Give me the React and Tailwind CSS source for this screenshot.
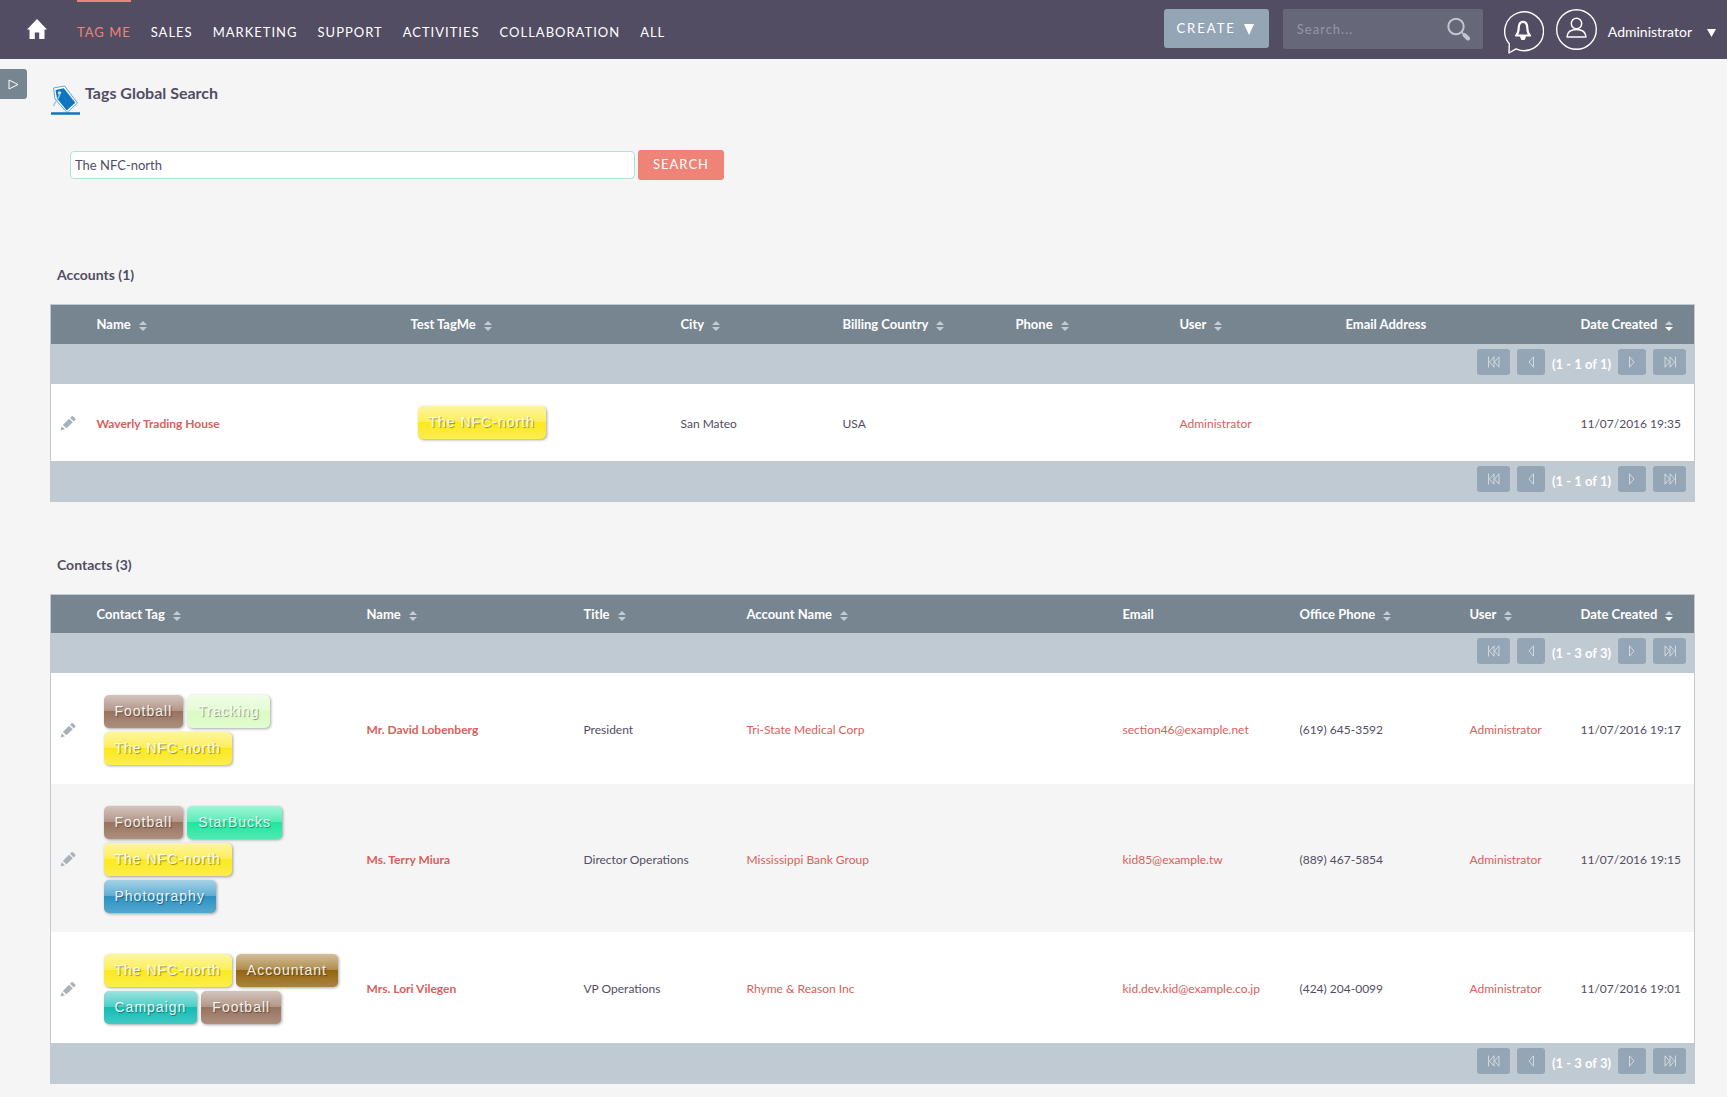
import { useState } from "react";
import clsx from "clsx";

const NAV = ["Tag Me", "Sales", "Marketing", "Support", "Activities", "Collaboration", "All"];

const TAG_COLORS = {
  Football: "bg-[#98735f]",
  Tracking: "bg-[#dafbc4]",
  "The NFC-north": "bg-[#fbe91f]",
  StarBucks: "bg-[#1fe79f]",
  Photography: "bg-[#2b92c3]",
  Accountant: "bg-[#946510]",
  Campaign: "bg-[#12bdb4]",
};

const ACCOUNTS = {
  title: "Accounts",
  columns: [
    { key: "name", label: "Name", sort: true, bold: true, link: true },
    { key: "tags", label: "Test TagMe", sort: true, width: "w-[270px]" },
    { key: "city", label: "City", sort: true, width: "w-[162px]" },
    { key: "country", label: "Billing Country", sort: true, width: "w-[173px]" },
    { key: "phone", label: "Phone", sort: true, width: "w-[164px]" },
    { key: "user", label: "User", sort: true, link: true, width: "w-[166px]" },
    { key: "email", label: "Email Address", link: true, width: "w-[235px]" },
    { key: "created", label: "Date Created", sort: true, active: true, width: "w-[122px]" },
  ],
  rows: [
    {
      name: "Waverly Trading House",
      tags: ["The NFC-north"],
      city: "San Mateo",
      country: "USA",
      user: "Administrator",
      created: "11/07/2016 19:35",
    },
  ],
};

const CONTACTS = {
  title: "Contacts",
  columns: [
    { key: "tags", label: "Contact Tag", sort: true, width: "w-[270px]" },
    { key: "name", label: "Name", sort: true, bold: true, link: true, width: "w-[217px]" },
    { key: "title", label: "Title", sort: true, width: "w-[163px]" },
    { key: "account", label: "Account Name", sort: true, link: true },
    { key: "email", label: "Email", link: true, width: "w-[177px]" },
    { key: "phone", label: "Office Phone", sort: true, width: "w-[170px]" },
    { key: "user", label: "User", sort: true, link: true, width: "w-[111px]" },
    { key: "created", label: "Date Created", sort: true, active: true, width: "w-[122px]" },
  ],
  rows: [
    {
      tags: ["Football", "Tracking", "The NFC-north"],
      name: "Mr. David Lobenberg",
      title: "President",
      account: "Tri-State Medical Corp",
      email: "section46@example.net",
      phone: "(619) 645-3592",
      user: "Administrator",
      created: "11/07/2016 19:17",
    },
    {
      tags: ["Football", "StarBucks", "The NFC-north", "Photography"],
      name: "Ms. Terry Miura",
      title: "Director Operations",
      account: "Mississippi Bank Group",
      email: "kid85@example.tw",
      phone: "(889) 467-5854",
      user: "Administrator",
      created: "11/07/2016 19:15",
    },
    {
      tags: ["The NFC-north", "Accountant", "Campaign", "Football"],
      name: "Mrs. Lori Vilegen",
      title: "VP Operations",
      account: "Rhyme & Reason Inc",
      email: "kid.dev.kid@example.co.jp",
      phone: "(424) 204-0099",
      user: "Administrator",
      created: "11/07/2016 19:01",
    },
  ],
};

function SortIcon({ active }) {
  return (
    <svg width="8" height="10" viewBox="0 0 8 10" className="mt-1 shrink-0" aria-hidden="true">
      <path d="M4 0L8 4H0z" fill="#c3ccd3" />
      <path d="M4 10L0 6H8z" fill={active ? "#ffffff" : "#c3ccd3"} />
    </svg>
  );
}

function PencilIcon() {
  return (
    <svg width="16" height="16" viewBox="0 0 16 16" fill="#aab2b9" aria-hidden="true">
      <path d="M.5 15.500l1.200-4.200L5 14.300z" />
      <path d="M2.800 9.900L9 3.700l3.800 3.500L6.500 13.300z" />
      <path d="M10 2.800l1.500-1.500q.8-.6 1.600.1l2 1.900q.7.800.1 1.600L13.800 6.400z" />
    </svg>
  );
}

function PagerButton({ label, wide, d }) {
  return (
    <button
      type="button"
      aria-label={label}
      className={clsx(
        "flex h-[26px] items-center justify-center rounded-[3px] bg-[#94a6b5]",
        wide ? "w-[33px]" : "w-7",
      )}
    >
      <svg width="14" height="12" viewBox="0 0 14 12" fill="none" stroke="#dfe6eb" strokeWidth="0.8">
        <path d={d} />
      </svg>
    </button>
  );
}

function Pager({ count, span }) {
  return (
    <tr className="bg-[#bfcad3]">
      <td colSpan={span} className="pt-[5px] pr-2 pb-[9px]">
        <div className="flex items-center justify-end gap-[7px]">
          <PagerButton wide label="First page" d="M1.500 .5v11M7 .8L2.500 6L7 11.200zM12 .8L7.500 6L12 11.200z" />
          <PagerButton label="Previous page" d="M9.500 .8L5 6l4.500 5.200z" />
          <span className="pt-1 text-[13px] leading-4 font-bold text-white">
            (1 - {count} of {count})
          </span>
          <PagerButton label="Next page" d="M4.500 .8L9 6l-4.500 5.200z" />
          <PagerButton wide label="Last page" d="M12.500 .5v11M7 .8L11.500 6L7 11.200zM2 .8L6.500 6L2 11.200z" />
        </div>
      </td>
    </tr>
  );
}

function Tag({ name }) {
  return (
    <span
      className={clsx(
        "h-[33px] rounded-[5px] bg-linear-[180deg,rgba(255,255,255,0.58)_0%,rgba(255,255,255,0.24)_50%,rgba(255,255,255,0)_50%,rgba(255,255,255,0.2)_100%] px-[11px] font-['Liberation_Sans',Arial,sans-serif] text-sm leading-8 tracking-[1px] whitespace-nowrap text-white/90 shadow-[1px_1px_3px_rgba(0,0,0,0.35)] [text-shadow:1px_1px_1px_rgba(0,0,0,0.4)]",
        TAG_COLORS[name],
      )}
    >
      {name}
    </span>
  );
}

function Cell({ column, value }) {
  if (column.key === "tags") {
    return (
      <div className="flex flex-wrap gap-1 pt-[22px] pr-1 pb-[19px] pl-[7px]">
        {value.map((t) => (
          <Tag key={t} name={t} />
        ))}
      </div>
    );
  }
  if (!value) return null;
  if (column.link) {
    return (
      <a href="#" className={clsx("text-[#d9605a]", column.bold && "font-bold")}>
        {value}
      </a>
    );
  }
  return value;
}

function ResultTable({ data }) {
  const { title, columns, rows } = data;
  const span = columns.length + 1;
  return (
    <section>
      <h2 className="pl-[7px] text-sm leading-5 font-bold">
        {title} ({rows.length})
      </h2>
      <table className="mt-[19px] w-full table-fixed border-collapse border border-[#bfcad3] text-left">
        <thead>
          <tr className="h-[39px] bg-[#778591] text-[13px] leading-4 text-white">
            <th aria-label="Edit" className="w-[38px]" />
            {columns.map((c) => (
              <th key={c.key} className={clsx("px-2 font-bold whitespace-nowrap", c.width)}>
                <div className="flex items-center gap-2">
                  {c.label}
                  {c.sort && <SortIcon active={c.active} />}
                </div>
              </th>
            ))}
          </tr>
        </thead>
        <tbody>
          <Pager count={rows.length} span={span} />
          {rows.map((row) => (
            <tr key={row.name} className="h-[77px] text-xs leading-4 odd:bg-[#f5f5f5] even:bg-white">
              <td className="pt-0.5 pl-[9px]">
                <a href="#" aria-label={`Edit ${row.name}`} className="block">
                  <PencilIcon />
                </a>
              </td>
              {columns.map((c) => (
                <td
                  key={c.key}
                  className={clsx("whitespace-nowrap", c.key === "tags" ? "px-2 py-0 align-top" : "px-2 pt-[3px]")}
                >
                  <Cell column={c} value={row[c.key]} />
                </td>
              ))}
            </tr>
          ))}
          <Pager count={rows.length} span={span} />
        </tbody>
      </table>
    </section>
  );
}

function Header() {
  return (
    <header className="flex h-[59px] items-start bg-[#534d64] pr-[11px] text-white">
      <a href="#" aria-label="Home" className="mt-[18px] ml-[26px]">
        <svg width="22" height="22" viewBox="0 0 22 22" fill="currentColor" aria-hidden="true">
          <path d="M11 1L1 11.500h2.500V21h5.300v-6.500h4.400V21h5.300v-9.500H21z" />
        </svg>
      </a>
      <nav className="ml-[29px] flex gap-5">
        {NAV.map((item, i) => (
          <a
            key={item}
            href="#"
            className={clsx(
              "border-t-2 pt-[20px] text-[13px] leading-5 tracking-[1px] uppercase",
              i === 0 ? "border-[#f08377] text-[#f08377]" : "border-transparent",
            )}
          >
            {item}
          </a>
        ))}
      </nav>
      <div className="ml-auto flex items-start">
        <button
          type="button"
          className="mt-[9px] flex h-[39px] items-center gap-2 rounded-[3px] bg-[#94a6b5] pr-[15px] pl-3 text-[13px] tracking-[2px]"
        >
          CREATE
          <svg width="10" height="11" viewBox="0 0 10 11" fill="currentColor" className="mt-0.5" aria-hidden="true">
            <path d="M0 0H10L5 11z" />
          </svg>
        </button>
        <form className="mt-[9px] ml-[14px] flex h-10 w-[200px] items-center rounded-[2px] bg-[#66687a] pr-3">
          <input
            type="text"
            aria-label="Search"
            placeholder="Search..."
            className="w-full min-w-0 bg-transparent pt-0.5 pl-[14px] text-[13px] tracking-[1px] placeholder:text-[#9596a5] focus:outline-none"
          />
          <button type="button" aria-label="Run search">
            <svg width="24" height="24" viewBox="0 0 24 24" fill="none" stroke="#c3c4cd" aria-hidden="true">
              <circle cx="9" cy="9.500" r="7.700" strokeWidth="2" />
              <path d="M17.500 18l3.500 3.500" strokeWidth="4" strokeLinecap="round" />
              <path d="M14.500 15l3 3" strokeWidth="1.500" />
            </svg>
          </button>
        </form>
        <button type="button" aria-label="Notifications" className="mt-[9px] ml-[19px]">
          <svg width="42" height="46" viewBox="0 0 42 46" fill="none" stroke="currentColor" aria-hidden="true">
            <path
              d="M7.300 34.800A19.400 19.400 0 1 1 14 39.900L7 44z"
              strokeWidth="1.400"
              strokeLinejoin="round"
            />
            <path
              d="M14 26.500c2.800-2.200 2.500-4.500 2.700-8 .2-3.600 1.800-5.600 4.300-5.600s4.100 2 4.300 5.600c.2 3.500-.1 5.800 2.700 8z"
              strokeWidth="2.200"
              strokeLinejoin="round"
            />
            <path d="M18.500 27.500h5l-1 3h-3z" fill="currentColor" />
          </svg>
        </button>
        <button type="button" className="mt-[9px] ml-3 flex text-sm">
          <svg width="41" height="41" viewBox="0 0 41 41" fill="none" stroke="currentColor" aria-hidden="true">
            <circle cx="20.500" cy="20.500" r="19.800" strokeWidth="1.400" />
            <circle cx="20.500" cy="14.500" r="5.200" strokeWidth="1.500" />
            <path d="M11 28q.5-7.500 9.500-7.500T30 28z" strokeWidth="1.500" strokeLinejoin="round" />
          </svg>
          <span className="mt-[13px] ml-[11px] leading-5">Administrator</span>
          <svg width="9" height="8" viewBox="0 0 9 8" fill="currentColor" className="mt-5 ml-[15px]" aria-hidden="true">
            <path d="M0 0H9L4.500 8z" />
          </svg>
        </button>
      </div>
    </header>
  );
}

export default function App() {
  const [query, setQuery] = useState("The NFC-north");

  return (
    <div className="min-h-screen bg-[#f5f5f5] font-[Lato,sans-serif] text-[#534d64]">
      <Header />
      <div className="flex items-start">
        <button
          type="button"
          aria-label="Show sidebar"
          className="mt-[10px] flex h-[30px] w-[27px] items-center justify-center rounded-r-[3px] bg-[#778591]"
        >
          <svg width="11" height="11" viewBox="0 0 11 11" fill="none" stroke="#ffffff" aria-hidden="true">
            <path d="M1 1v9l9-4.500z" />
          </svg>
        </button>
        <main className="min-w-0 flex-1 pr-8 pb-3 pl-[23px]">
          <div className="flex pt-[26px]">
            <svg width="32" height="31" viewBox="0 0 32 31" aria-hidden="true">
              <path d="M3.500 3L14.500 1l13 17L17 27.500 5 14z" fill="#ffffff" stroke="#5ba7dc" />
              <path d="M5.500 5L13.800 3.300 25.300 17.800l-8.600 7.700L7 13.500z" fill="#0f75bf" />
              <circle cx="9.500" cy="8" r="1.700" fill="#cfe6f7" />
              <path d="M9.500 8c1 5-4 7-6 13" fill="none" stroke="#9cc9ea" strokeWidth="1.500" />
              <path d="M1 28.500h29" stroke="#0f75bf" strokeWidth="2.500" />
            </svg>
            <h1 className="ml-[3px] text-base leading-4 font-bold">Tags Global Search</h1>
          </div>
          <form className="mt-[34px] flex items-center gap-[3px] pl-5" onSubmit={(e) => e.preventDefault()}>
            <input
              type="text"
              aria-label="Tag to search for"
              value={query}
              onChange={(e) => setQuery(e.target.value)}
              className="h-7 w-[565px] rounded-[4px] border border-[#a5e8d6] bg-white px-1 text-[13px] focus:outline-none"
            />
            <button
              type="submit"
              className="h-[30px] rounded-[3px] bg-[#f08377] px-[15px] text-[13px] tracking-[1px] text-white"
            >
              SEARCH
            </button>
          </form>
          <div className="mt-[85px] flex flex-col gap-[53px]">
            <ResultTable data={ACCOUNTS} />
            <ResultTable data={CONTACTS} />
          </div>
        </main>
      </div>
    </div>
  );
}
